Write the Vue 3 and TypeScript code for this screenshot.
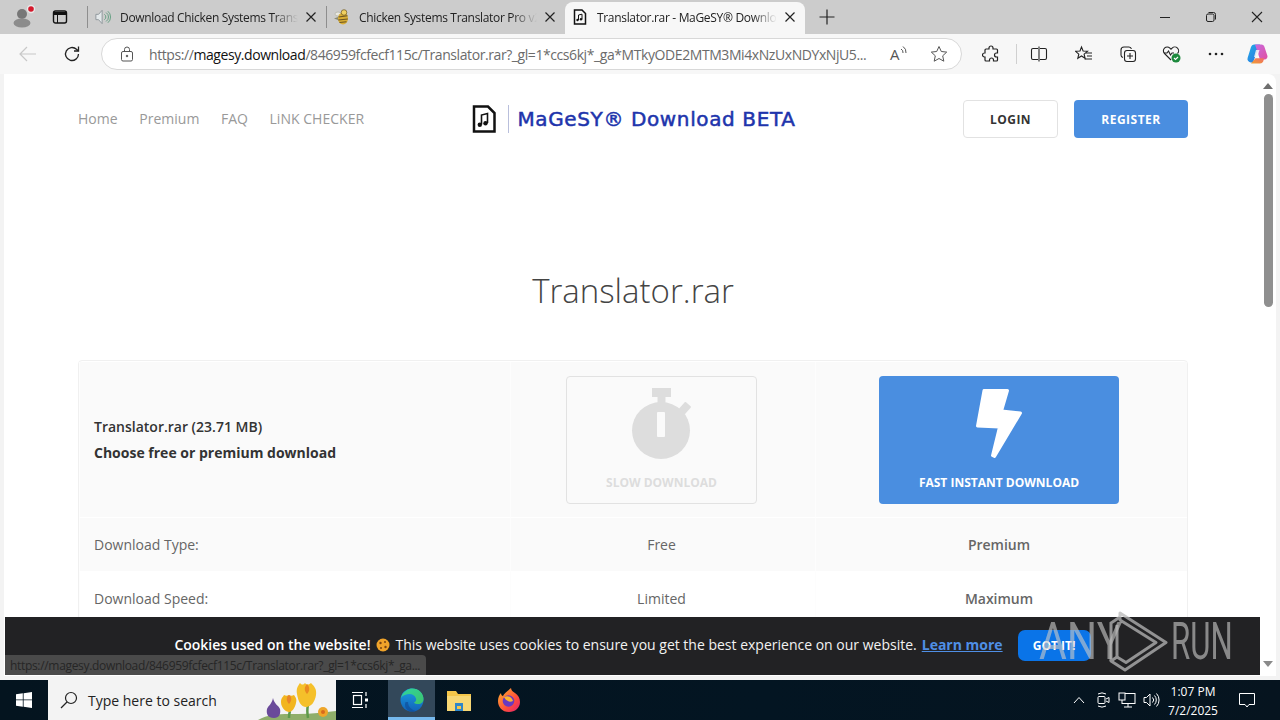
<template>
  <div class="screen">
    <!-- tab strip -->
    <div class="tabstrip">
      <div class="profile">
        <svg width="44" height="34" viewBox="0 0 44 34">
          <circle cx="22" cy="14" r="5" fill="#777" />
          <ellipse cx="22" cy="23" rx="8.5" ry="4.5" fill="#8c8c8c" />
          <circle cx="31" cy="9" r="4.2" fill="#e8e8e8" />
          <circle cx="31" cy="9" r="2.8" fill="#d5192c" />
        </svg>
      </div>
      <div class="sidebar-btn">
        <svg width="16" height="16" viewBox="0 0 16 16" fill="none" stroke="#111">
          <rect x="1.5" y="2" width="13" height="12" rx="2" stroke-width="1.4" />
          <path d="M1.5 4.5h13" stroke-width="3" />
          <path d="M5.5 5v9" stroke-width="1" />
        </svg>
      </div>
      <span class="tab-sep first"></span>
      <div class="tab">
        <svg class="tab-icon" width="18" height="18" viewBox="0 0 18 18" fill="none">
          <path d="M1 6h3l4-4.500v15L4 12H1z" fill="#e3e8ea" stroke="#8a9296" />
          <path d="M10.500 6a3.500 3.500 0 0 1 0 6M12.500 4a6 6 0 0 1 0 10M14.500 2.500a8.500 8.500 0 0 1 0 13" stroke="#5d9c7c" />
        </svg>
        <span class="tab-title">Download Chicken Systems Translator Pro v2</span>
        <svg class="tab-close" width="16" height="16" viewBox="0 0 16 16"><path d="M3.500 3.500l9 9M12.500 3.500l-9 9" stroke="#222" stroke-width="1.200" /></svg>
      </div>
      <span class="tab-sep"></span>
      <div class="tab">
        <svg class="tab-icon" width="16" height="16" viewBox="0 0 16 16">
          <path d="M0 9.500l4-1.500v3z" fill="#8a8a70" />
          <ellipse cx="4" cy="5" rx="3" ry="2" fill="#e9e9e2" stroke="#9a9a88" stroke-width=".5" />
          <ellipse cx="9" cy="9.500" rx="5" ry="6" fill="#d9ae35" />
          <path d="M4.500 8l9-1.200M4.200 11l9.600-1M5.500 13.500l7-.7" stroke="#6b5420" stroke-width="1.100" />
          <circle cx="10" cy="3.500" r="2.800" fill="#f0d060" stroke="#6b5420" stroke-width=".7" />
        </svg>
        <span class="tab-title">Chicken Systems Translator Pro v2.5 Full</span>
        <svg class="tab-close" width="16" height="16" viewBox="0 0 16 16"><path d="M3.500 3.500l9 9M12.500 3.500l-9 9" stroke="#222" stroke-width="1.200" /></svg>
      </div>
      <div class="tab active">
        <svg class="tab-icon" width="16" height="16" viewBox="0 0 16 16" fill="none">
          <path d="M2.500 1h7.500l3.500 3.500V15h-11z" stroke="#111" stroke-width="1.500" />
          <path d="M6.500 11V6l3.500-.8v5" stroke="#111" />
          <circle cx="5.500" cy="11" r="1.200" fill="#111" />
          <circle cx="9" cy="10.300" r="1.200" fill="#111" />
        </svg>
        <span class="tab-title">Translator.rar - MaGeSY® Download BETA</span>
        <svg class="tab-close" width="16" height="16" viewBox="0 0 16 16"><path d="M3.500 3.500l9 9M12.500 3.500l-9 9" stroke="#222" stroke-width="1.200" /></svg>
      </div>
      <div class="new-tab">
        <svg width="16" height="16" viewBox="0 0 16 16"><path d="M8 .5v15M.5 8h15" stroke="#222" stroke-width="1.200" /></svg>
      </div>
      <div class="win-controls">
        <div class="win-btn"><svg width="12" height="12" viewBox="0 0 12 12"><path d="M1 6.500h10" stroke="#222" /></svg></div>
        <div class="win-btn"><svg width="12" height="12" viewBox="0 0 12 12" fill="none" stroke="#222"><rect x="1.500" y="3" width="7.500" height="7.500" rx="1.500" /><path d="M3.500 1.500h5a2 2 0 0 1 2 2v5" /></svg></div>
        <div class="win-btn"><svg width="12" height="12" viewBox="0 0 12 12"><path d="M1 1l10 10M11 1L1 11" stroke="#222" stroke-width="1.100" /></svg></div>
      </div>
    </div>

    <!-- toolbar -->
    <div class="toolbar">
      <div class="nav-btn back">
        <svg width="18" height="16" viewBox="0 0 18 16" fill="none" stroke="#c8c8c8" stroke-width="1.200"><path d="M1 8h16M8 1L1 8l7 7" /></svg>
      </div>
      <div class="nav-btn reload">
        <svg width="18" height="18" viewBox="0 0 18 18" fill="none" stroke="#222" stroke-width="1.300"><path d="M15.500 9a6.500 6.500 0 1 1-2-4.700L15.500 6" /><path d="M15.500 1.500V6H11" /></svg>
      </div>
      <div class="address">
        <svg class="lock" width="14" height="16" viewBox="0 0 14 16" fill="none" stroke="#555"><rect x="1.500" y="5.500" width="11" height="9.500" rx="1.500" /><path d="M4.500 5.500V3.500a2.500 2.500 0 0 1 5 0v2" /><circle cx="7" cy="10" r=".8" fill="#555" /></svg>
        <div class="url"><span class="url-dim">https://</span><span class="url-host">magesy.download</span><span class="url-dim">/846959fcfecf115c/Translator.rar?_gl=1*ccs6kj*_ga*MTkyODE2MTM3Mi4xNzUxNDYxNjU5...</span></div>
        <svg class="addr-icon" width="20" height="18" viewBox="0 0 20 18" fill="none" stroke="#555">
          <text x="1" y="15" font-family="Open Sans" font-size="15" fill="#555" stroke="none">A</text>
          <path d="M12 4a4 4 0 0 1 2 4M14 1.500a7 7 0 0 1 3 6.500" />
        </svg>
        <svg class="addr-icon star" width="18" height="18" viewBox="0 0 18 18" fill="none" stroke="#555"><path d="M9 1.500l2.300 5 5.400.6-4 3.700 1.100 5.400L9 13.500l-4.800 2.700 1.100-5.400-4-3.700 5.400-.6z" /></svg>
      </div>
      <div class="tool-btn ext">
        <svg width="18" height="18" viewBox="0 0 18 18" fill="none" stroke="#222" stroke-width="1.200"><path d="M7 3a2 2 0 0 1 4 0v1h3.500a1 1 0 0 1 1 1v3h-1a2 2 0 0 0 0 4h1v3a1 1 0 0 1-1 1h-3v-1a2 2 0 0 0-4 0v1H4a1 1 0 0 1-1-1v-3H2.500a2 2 0 0 1 0-4H3V5a1 1 0 0 1 1-1h3z" /></svg>
      </div>
      <span class="tool-sep"></span>
      <div class="tool-btn split">
        <svg width="18" height="18" viewBox="0 0 18 18" fill="none" stroke="#222" stroke-width="1.100"><path d="M8 3.500H3a1.500 1.500 0 0 0-1.500 1.500v8A1.500 1.500 0 0 0 3 14.500h5M9 1.500v15M10 3.500h5A1.500 1.500 0 0 1 16.500 5v8a1.500 1.500 0 0 1-1.500 1.500h-5" /></svg>
      </div>
      <div class="tool-btn favs">
        <svg width="18" height="18" viewBox="0 0 18 18" fill="none" stroke="#222" stroke-width="1.100"><path d="M6.500 2l1.600 4 4.400.3-3.400 2.800 1 4.200L6.500 11l-3.700 2.300 1-4.200L.5 6.300 5 6z" /><path d="M11 8h6M12 11h5M9.500 14h7.500" /></svg>
      </div>
      <div class="tool-btn">
        <svg width="18" height="18" viewBox="0 0 18 18" fill="none" stroke="#222" stroke-width="1.100"><rect x="5.500" y="5.500" width="11" height="11" rx="2.500" /><path d="M11 8v6M8 11h6M4 12.500a2.500 2.500 0 0 1-2-2.500V5a3 3 0 0 1 3-3h5a2.500 2.500 0 0 1 2.400 2" /></svg>
      </div>
      <div class="tool-btn">
        <svg width="20" height="18" viewBox="0 0 20 18" fill="none" stroke="#222" stroke-width="1.100"><path d="M9 15L2.500 8.500a3.800 3.800 0 0 1 5.400-5.400L9 4.200l1.100-1.100a3.800 3.800 0 0 1 5.400 5.400" /><path d="M2 8h3l1.500-2 2 4 1.500-2h2" /><circle cx="14" cy="13" r="4.500" fill="#1d8a3d" stroke="none" /><path d="M12 13l1.500 1.500 2.500-2.500" stroke="#fff" /></svg>
      </div>
      <div class="tool-btn">
        <svg width="16" height="4" viewBox="0 0 16 4" fill="#222"><circle cx="2" cy="2" r="1.300" /><circle cx="8" cy="2" r="1.300" /><circle cx="14" cy="2" r="1.300" /></svg>
      </div>
      <div class="copilot">
        <svg width="22" height="22" viewBox="0 0 22 22">
          <defs>
            <linearGradient id="cp1" x1="0" y1="0" x2="1" y2="1"><stop offset="0" stop-color="#1fb0e8" /><stop offset="1" stop-color="#2f6fe0" /></linearGradient>
            <linearGradient id="cp2" x1="0" y1="0" x2="1" y2="1"><stop offset="0" stop-color="#c76be0" /><stop offset="1" stop-color="#e04fa0" /></linearGradient>
            <linearGradient id="cp3" x1="0" y1="1" x2="1" y2="0"><stop offset="0" stop-color="#f0a030" /><stop offset="1" stop-color="#f06a6a" /></linearGradient>
          </defs>
          <path d="M8 1.500h6l-4 10-3 8H5a3.500 3.500 0 0 1-3.400-4.500L5 4a3.500 3.500 0 0 1 3-2.500z" fill="url(#cp1)" />
          <path d="M9 1.500h6.500a3 3 0 0 1 2.800 2l3 9a3 3 0 0 1-2.800 4H14z" fill="url(#cp2)" />
          <path d="M5 20.500h9a3.500 3.500 0 0 0 3.200-2.300l1-3H9.500z" fill="url(#cp3)" />
          <path d="M10 7l3.500 0-2 7H8z" fill="#f4f4f4" opacity=".85" />
        </svg>
      </div>
    </div>

    <!-- page -->
    <div class="viewport">
      <div class="page">
        <header class="site-header">
          <nav class="site-nav">
            <a v-for="link in navLinks" :key="link">{{ link }}</a>
          </nav>
          <div class="logo">
            <svg width="24" height="28" viewBox="0 0 24 28" fill="none">
              <path d="M2 1.500h14l6.500 6.500v18.500H2z" stroke="#111" stroke-width="2.500" />
              <path d="M9.500 19.500V10l6-1.500V18" stroke="#111" stroke-width="1.600" />
              <circle cx="7.800" cy="19.700" r="2.200" fill="#111" />
              <circle cx="13.500" cy="18.300" r="2.200" fill="#111" />
            </svg>
            <span class="logo-line"></span>
            <span class="logo-text">MaGeSY® Download BETA</span>
          </div>
          <div class="auth">
            <button class="btn-login">LOGIN</button>
            <button class="btn-register">REGISTER</button>
          </div>
        </header>

        <h1 class="file-title">Translator.rar</h1>

        <section class="compare">
          <div class="cell shade first-cell">
            <p class="file-name">Translator.rar (23.71 MB)</p>
            <p class="choose">Choose free or premium download</p>
          </div>
          <div class="cell shade center mid-col">
            <div class="dl-btn slow">
              <svg width="60" height="73" viewBox="0 0 60 73">
                <path d="M21 1h19v9h-5.500v8h-8v-8H21z" fill="#ddd" />
                <rect x="50" y="16" width="8" height="10" rx="1" transform="rotate(42 54 21)" fill="#ddd" />
                <ellipse cx="30" cy="43.500" rx="29" ry="28.500" fill="#ddd" />
                <rect x="26" y="25" width="8" height="25" rx="1" fill="#fafafa" />
              </svg>
              <span>SLOW DOWNLOAD</span>
            </div>
          </div>
          <div class="cell shade center last-col">
            <div class="dl-btn fast">
              <svg width="50" height="76" viewBox="0 0 50 76">
                <path d="M10 4.500h23.500l-6 20.500 19 2-26 43.500-2-1 7-28.500-22-1z" fill="#fff" stroke="#fff" stroke-width="3" stroke-linejoin="round" />
              </svg>
              <span>FAST INSTANT DOWNLOAD</span>
            </div>
          </div>

          <template v-for="(row, i) in rows" :key="row.label">
            <div class="cell row-label" :class="{ shade: i % 2 === 0 }">{{ row.label }}</div>
            <div class="cell row-val center mid-col" :class="{ shade: i % 2 === 0 }">{{ row.free }}</div>
            <div class="cell row-val center strong last-col" :class="{ shade: i % 2 === 0 }">{{ row.premium }}</div>
          </template>
        </section>
      </div>

      <div class="scrollbar">
        <svg width="10" height="6" viewBox="0 0 10 6"><path d="M5 0l5 6H0z" fill="#6f6f6f" /></svg>
        <div class="thumb-track"><div class="thumb"></div></div>
        <svg width="10" height="6" viewBox="0 0 10 6"><path d="M5 6l5-6H0z" fill="#8a8a8a" /></svg>
      </div>

      <div class="cookie-bar">
        <strong>Cookies used on the website!</strong>
        <svg class="cookie" width="14" height="14" viewBox="0 0 14 14">
          <circle cx="7" cy="7" r="6.500" fill="#f0a32a" />
          <circle cx="4.500" cy="5" r="1.200" fill="#7a4310" />
          <circle cx="9" cy="4" r="1" fill="#7a4310" />
          <circle cx="9.500" cy="9" r="1.200" fill="#7a4310" />
          <circle cx="5" cy="10" r="1" fill="#7a4310" />
        </svg>
        <span>This website uses cookies to ensure you get the best experience on our website.</span>
        <a class="learn">Learn more</a>
        <button class="got-it">GOT IT!</button>
      </div>

      <div class="status-url">https://magesy.download/846959fcfecf115c/Translator.rar?_gl=1*ccs6kj*_ga...</div>

      <div class="watermark">
        <span class="wm-text any">ANY</span>
        <svg width="60" height="62" viewBox="0 0 60 62" fill="none" stroke="#b8b8b8" stroke-width="3" opacity=".75">
          <path d="M12 2l46 29.500L17 59l-14-9 6-4 9 5.500L48 31.500 12 9z" stroke-linejoin="round" />
          <path d="M3 50V12l9-6M9 46V14" />
        </svg>
        <span class="wm-text run">RUN</span>
      </div>
    </div>

    <!-- taskbar -->
    <div class="taskbar">
      <div class="start">
        <svg width="16" height="16" viewBox="0 0 16 16" fill="#fff"><path d="M0 2.300l6.800-1v6.200H0zM7.600 1.200L16 0v7.500H7.600zM0 8.300h6.800v6.400l-6.800-1zM7.600 8.300H16V16l-8.400-1.200z" /></svg>
      </div>
      <div class="search">
        <svg width="18" height="18" viewBox="0 0 18 18" fill="none" stroke="#222" stroke-width="1.200"><circle cx="11" cy="7" r="5.500" /><path d="M7 11l-6 6" /></svg>
        <span>Type here to search</span>
        <svg class="flowers" width="80" height="40" viewBox="0 0 80 40">
          <path d="M2 40c12-7 26-6 40-6s26-2 38-3v9z" fill="#8fae6a" />
          <path d="M18 38c-6 0-8-4-7-9 1-3 5-5 6-11 1 6 6 8 7 11 1 5-1 9-6 9z" fill="#6a4a9a" />
          <path d="M52 38c-1-6-1-9 0-13M33 38c0-3 0-4 1-7" stroke="#5e9a4a" stroke-width="2.500" />
          <path d="M25 22c0-4 2-5 3-7 2 1 3 1 5 0 2 1 3 1 5 0 2 3 3 4 2 8-1 5-4 9-7 9s-8-4-8-10z" fill="#f2b51f" />
          <path d="M33 15c3 2 3 6 0 9-3-3-3-7 0-9z" fill="#e8852a" />
          <path d="M41 14c-1-6 1-8 3-11 2 2 3 2 5 0 2 2 3 2 6 0 3 3 6 6 5 12-1 7-5 12-10 12s-8-6-9-13z" fill="#f5c02a" />
          <path d="M51 4c3 3 3 7 0 10-3-3-3-7 0-10z" fill="#ea8a20" />
          <circle cx="67" cy="32" r="5" fill="#eea62a" />
          <circle cx="67" cy="32" r="2" fill="#d76a1e" />
        </svg>
      </div>
      <div class="task-item taskview">
        <svg width="18" height="18" viewBox="0 0 18 18" fill="none" stroke="#fff" stroke-width="1.200">
          <path d="M1 1.500h11M1 16.500h11" /><rect x="2.500" y="4.500" width="8" height="9" /><path d="M15 1v4M15 13v4" /><rect x="14" y="7.500" width="3" height="3" fill="#fff" stroke="none" />
        </svg>
      </div>
      <div class="task-item edge">
        <svg width="24" height="24" viewBox="0 0 24 24">
          <defs>
            <linearGradient id="eg1" x1="0" y1="0" x2="1" y2="1"><stop offset="0" stop-color="#2fd3a0" /><stop offset="1" stop-color="#3ec46a" /></linearGradient>
            <linearGradient id="eg2" x1="0" y1="0" x2="0" y2="1"><stop offset="0" stop-color="#1b9de2" /><stop offset="1" stop-color="#1263b8" /></linearGradient>
          </defs>
          <circle cx="12" cy="12" r="11.500" fill="url(#eg2)" />
          <path d="M1 10C3 3 9 .5 12 .5c7 0 11.500 5 11.500 10.500 0 3.500-2.500 5-5 5-2 0-4-.5-4.500-1.500 2-1 2.500-2.500 2-4-1-3-3.500-4.500-6.500-4.500S3 7 1 10z" fill="url(#eg1)" />
          <path d="M8 14c0 5 4 8 8 9-2 1-4 1-5 .5C6 22.500 4 18 5.500 14z" fill="#0f4f9a" opacity=".7" />
        </svg>
      </div>
      <div class="task-item">
        <svg width="24" height="22" viewBox="0 0 24 22">
          <path d="M0 2h9l2 3h13v17H0z" fill="#f4c64a" />
          <path d="M0 7h24v15H0z" fill="#f7d774" />
          <path d="M8 14h8v8H8z" fill="#2f86c9" />
          <path d="M10 17h4v3h-4z" fill="#f4c64a" />
        </svg>
      </div>
      <div class="task-item fox">
        <svg width="26" height="26" viewBox="0 0 26 26">
          <defs>
            <linearGradient id="ff" x1="0" y1="0" x2="1" y2="1"><stop offset="0" stop-color="#ffb52e" /><stop offset=".6" stop-color="#ff4f3a" /><stop offset="1" stop-color="#e11d74" /></linearGradient>
          </defs>
          <path d="M13 25C6 25 2 20 2 14c0-3 1-6 3-8 0 2 1 3 2 3 1-3 5-5 8-8 0 2 2 4 4 5 3 2 5 5 5 9 0 6-5 10-11 10z" fill="url(#ff)" />
          <circle cx="12.500" cy="14" r="5.800" fill="#6a3ac0" />
          <path d="M8 10c4-2 8 0 9 4-2 1-4 1-5 0-2-1-3-2-4-4z" fill="#ffb52e" />
        </svg>
      </div>
      <div class="tray">
        <svg class="tray-icon" width="12" height="8" viewBox="0 0 12 8" fill="none" stroke="#fff"><path d="M1 7l5-5.500L11 7" /></svg>
        <svg class="tray-icon" width="14" height="18" viewBox="0 0 14 18" fill="none" stroke="#fff"><path d="M2 3a8 8 0 0 1 8 0M2 15a8 8 0 0 0 8 0" /><rect x="2" y="5.500" width="7" height="7" rx="1" /><path d="M10 8l3-1.500v5L10 10" /></svg>
        <svg class="tray-icon" width="18" height="16" viewBox="0 0 18 16" fill="none" stroke="#fff"><rect x="4" y="1.500" width="13" height="10" /><rect x="1" y="1" width="6" height="7" fill="#0a1a28" /><path d="M10 11.500V15M6 15h8" /></svg>
        <svg class="tray-icon" width="16" height="16" viewBox="0 0 16 16" fill="none" stroke="#fff"><path d="M1 5.500h2.500L7 2v12L3.500 10.500H1z" /><path d="M9.500 5.500a3.500 3.500 0 0 1 0 5M11.500 3.500a6.500 6.500 0 0 1 0 9M13.500 1.500a9.500 9.500 0 0 1 0 13" /></svg>
      </div>
      <div class="clock">
        <span>1:07 PM</span>
        <span>7/2/2025</span>
      </div>
      <div class="notify">
        <svg width="16" height="16" viewBox="0 0 16 16" fill="none" stroke="#fff"><path d="M.5 1.500h15v11H10l-2 2.500-2-2.500H.5z" /></svg>
      </div>
    </div>
  </div>
</template>

<script setup lang="ts">
const navLinks: string[] = ['Home', 'Premium', 'FAQ', 'LiNK CHECKER']

const rows = [
  { label: 'Download Type:', free: 'Free', premium: 'Premium' },
  { label: 'Download Speed:', free: 'Limited', premium: 'Maximum' },
]
</script>

<style>
html,
body {
  margin: 0;
  overflow: hidden;
}
</style>

<style scoped>
.screen {
  width: 1280px;
  height: 720px;
  display: flex;
  flex-direction: column;
  overflow: hidden;
  background: #f3f3f3;
  font-family: "Open Sans", "Noto Sans", sans-serif;
}
.tabstrip {
  height: 34px;
  flex: none;
  display: flex;
  background: #cccccc;
  color: #222;
  font-size: 12px;
}
.profile {
  width: 44px;
  height: 34px;
}
.sidebar-btn {
  width: 32px;
  display: flex;
  align-items: center;
  justify-content: center;
}
.tab-sep {
  width: 1px;
  height: 22px;
  margin-top: 6px;
  background: #8e8e8e;
  flex: none;
}
.tab-sep.first {
  margin-left: 11px;
}
.tab {
  width: 238px;
  flex: none;
  display: flex;
  align-items: center;
  gap: 9px;
  padding: 0 7px;
  box-sizing: border-box;
}
.tab.active {
  width: 240px;
  margin-top: 2px;
  padding-bottom: 2px;
  background: #f7f7f7;
  border-radius: 8px 8px 0 0;
}
.tab-icon {
  flex: none;
  width: 16px;
}
.tab-title {
  flex: 1;
  min-width: 0;
  margin-right: -4px;
  white-space: nowrap;
  overflow: hidden;
  font-size: 12px;
  letter-spacing: -0.32px;
  -webkit-mask-image: linear-gradient(to right, #000 86%, transparent 100%);
  mask-image: linear-gradient(to right, #000 86%, transparent 100%);
}
.tab-close {
  flex: none;
}
.new-tab {
  width: 44px;
  display: flex;
  align-items: center;
  justify-content: center;
}
.win-controls {
  margin-left: auto;
  display: flex;
}
.win-btn {
  width: 46px;
  display: flex;
  align-items: center;
  justify-content: center;
}

.toolbar {
  height: 40px;
  flex: none;
  display: flex;
  align-items: center;
  background: #f7f7f7;
  box-sizing: border-box;
}
.nav-btn {
  width: 44px;
  display: flex;
  justify-content: center;
}
.nav-btn.back {
  width: 56px;
}
.nav-btn.reload {
  width: 32px;
}
.address {
  width: 861px;
  height: 32px;
  margin-left: 13px;
  flex: none;
  display: flex;
  align-items: center;
  box-sizing: border-box;
  background: #fff;
  border: 1px solid #d8d8d8;
  border-radius: 16px;
  padding-left: 18px;
}
.lock {
  flex: none;
}
.url {
  width: 722px;
  margin-left: 15px;
  flex: none;
  font-size: 14px;
  letter-spacing: -0.42px;
  white-space: nowrap;
  overflow: hidden;
  color: #6b6b6b;
}
.url-host {
  color: #111;
}
.addr-icon {
  flex: none;
  margin-left: 18px;
}
.addr-icon.star {
  margin-left: 21px;
}
.tool-btn {
  width: 44px;
  flex: none;
  display: flex;
  align-items: center;
  justify-content: center;
}
.tool-btn.ext {
  margin-left: 7px;
}
.tool-sep {
  width: 1px;
  height: 20px;
  background: #d0d0d0;
  flex: none;
  margin-left: 3px;
}
.tool-btn.favs {
  margin-left: 1px;
}
.copilot {
  flex: none;
  margin-left: 8px;
  display: flex;
}

.viewport {
  position: relative;
  flex: none;
  height: 602px;
  margin: 0 4px 4px;
  display: flex;
  overflow: hidden;
  background: #fff;
  border-radius: 0 8px 0 0;
}
.page {
  width: 1256px;
  flex: none;
  box-sizing: border-box;
  padding: 26px 72px 0 74px;
  color: #666;
}
.site-header {
  display: grid;
  grid-template-columns: 1fr auto 1fr;
  align-items: center;
  height: 38px;
}
.site-nav {
  display: flex;
  gap: 21.500px;
  padding-bottom: 2px;
  font-size: 14px;
  letter-spacing: 0.03px;
  color: #999;
}
.logo {
  display: flex;
  align-items: center;
  margin-left: 2px;
}
.logo-line {
  width: 1px;
  height: 28px;
  margin: 0 8px 0 12px;
  background: #b9bfdc;
}
.logo-text {
  font-family: "DejaVu Sans", Verdana, sans-serif;
  font-size: 20px;
  font-weight: 400;
  letter-spacing: 0.620px;
  -webkit-text-stroke: 0.5px #2034ac;
  color: #2034ac;
  white-space: nowrap;
}
.auth {
  display: flex;
  justify-content: flex-end;
  gap: 16px;
}
.auth button {
  height: 38px;
  box-sizing: border-box;
  border-radius: 4px;
  font-family: inherit;
  font-size: 12px;
  font-weight: 700;
  letter-spacing: 0.5px;
}
.btn-login {
  width: 95px;
  background: #fff;
  border: 1px solid #e2e2e2;
  color: #333;
}
.btn-register {
  width: 114px;
  background: #4a8ee0;
  border: 0;
  color: #fff;
}
.file-title {
  margin: 131px 0 47px;
  text-align: center;
  font-size: 33px;
  line-height: 44px;
  font-weight: 300;
  color: #444;
}
.compare {
  display: grid;
  grid-template-columns: 431px 305px 1fr;
  padding-top: 1px;
  border: 1px solid #f0f0f0;
  border-radius: 4px;
}
.cell {
  box-sizing: border-box;
  min-height: 54px;
  display: flex;
  align-items: center;
  font-size: 14px;
  border-left: 1px solid #fdfdfd;
  border-bottom: 1px solid #fff;
}
.cell.shade {
  background: #fafafa;
}
.center {
  justify-content: center;
}
.mid-col {
  padding-right: 3px;
}
.last-col {
  padding-right: 5px;
}
.first-cell {
  height: 156px;
  flex-direction: column;
  align-items: flex-start;
  justify-content: center;
  padding-left: 14px;
  color: #333;
}
.first-cell p {
  margin: 0;
  line-height: 26px;
}
.file-name {
  font-weight: 600;
}
.choose {
  font-weight: 700;
}
.row-label {
  padding-left: 14px;
}
.strong {
  font-weight: 600;
}
.dl-btn {
  height: 128px;
  box-sizing: border-box;
  border-radius: 4px;
  display: flex;
  flex-direction: column;
  align-items: center;
  padding: 10px 0 13px;
  font-size: 12px;
  font-weight: 700;
}
.dl-btn span {
  margin-top: auto;
}
.dl-btn.slow {
  width: 191px;
  color: #ddd;
  background: #fafafa;
  border: 1px solid #e2e2e2;
  padding-bottom: 12px;
}
.dl-btn.slow svg {
  margin-right: 1px;
}
.dl-btn.fast {
  width: 240px;
  color: #fff;
  background: #4a8ee0;
}

.scrollbar {
  width: 16px;
  flex: none;
  display: flex;
  flex-direction: column;
  align-items: center;
  padding: 9px 0;
  box-sizing: border-box;
  gap: 4px;
}
.thumb-track {
  flex: 1;
  width: 9px;
}
.thumb {
  width: 9px;
  height: 213px;
  margin-top: 1px;
  border-radius: 5px;
  background: #8f8f8f;
}

.cookie-bar {
  position: absolute;
  left: 1px;
  right: 16px;
  bottom: 1px;
  height: 58px;
  box-sizing: border-box;
  display: flex;
  align-items: center;
  justify-content: center;
  gap: 5px;
  padding-bottom: 4px;
  background: #222224;
  color: #f2f2f2;
  font-size: 14px;
  white-space: nowrap;
}
.cookie-bar strong {
  color: #fff;
  font-weight: 600;
}
.cookie {
  margin: 1px 1px 0 0;
}
.learn {
  color: #4f8fe6;
  font-weight: 700;
  text-decoration: underline;
}
.got-it {
  width: 73px;
  height: 31px;
  margin: 3px 0 0 10px;
  background: #0a74e8;
  border: 0;
  border-radius: 7px;
  color: #fff;
  font-family: inherit;
  font-size: 12px;
  font-weight: 700;
}
.status-url {
  position: absolute;
  left: 1px;
  bottom: 1px;
  width: 421px;
  height: 20px;
  box-sizing: border-box;
  padding-left: 5px;
  background: #4a4a4a;
  border-radius: 0 4px 0 0;
  color: #262626;
  font-size: 12px;
  letter-spacing: -0.32px;
  line-height: 21px;
  white-space: nowrap;
  overflow: hidden;
}
.watermark {
  position: absolute;
  left: 1035px;
  top: 537px;
  display: flex;
  align-items: center;
  pointer-events: none;
  height: 62px;
}
.wm-text {
  display: block;
  font-family: Roboto, sans-serif;
  font-weight: 400;
  font-size: 52px;
  line-height: 62px;
  color: rgba(200, 200, 200, 0.62);
  transform-origin: left center;
  white-space: nowrap;
}
.wm-text.any {
  width: 69px;
  transform: scaleX(0.82);
}
.wm-text.run {
  width: 58px;
  margin-left: 3px;
  transform: scaleX(0.6);
}

.taskbar {
  height: 40px;
  flex: none;
  display: flex;
  align-items: center;
  background: linear-gradient(to right, #04141f, #031522 60%, #06141f);
  color: #fff;
}
.start {
  width: 48px;
  height: 40px;
  display: flex;
  align-items: center;
  justify-content: center;
}
.search {
  position: relative;
  width: 288px;
  height: 40px;
  box-sizing: border-box;
  padding-left: 12px;
  display: flex;
  align-items: center;
  gap: 10px;
  background: #f3f3f3;
  color: #222;
  font-size: 14px;
  overflow: hidden;
}
.flowers {
  position: absolute;
  right: 0;
  top: 0;
}
.task-item {
  width: 48px;
  height: 40px;
  box-sizing: border-box;
  display: flex;
  align-items: center;
  justify-content: center;
  flex: none;
}
.edge {
  width: 47px;
  background: #33485a;
  border-bottom: 3px solid #76b9ed;
  margin-left: 4px;
  padding-top: 3px;
}
.fox {
  margin-left: 2px;
}
.tray {
  margin-left: auto;
  display: flex;
  align-items: center;
}
.tray-icon {
  width: 24px;
  flex: none;
}
.clock {
  width: 60px;
  padding-top: 2px;
  display: flex;
  flex-direction: column;
  align-items: center;
  font-size: 12px;
  line-height: 19px;
  white-space: nowrap;
}
.notify {
  width: 48px;
  margin-right: 9px;
  display: flex;
  justify-content: center;
}
</style>
